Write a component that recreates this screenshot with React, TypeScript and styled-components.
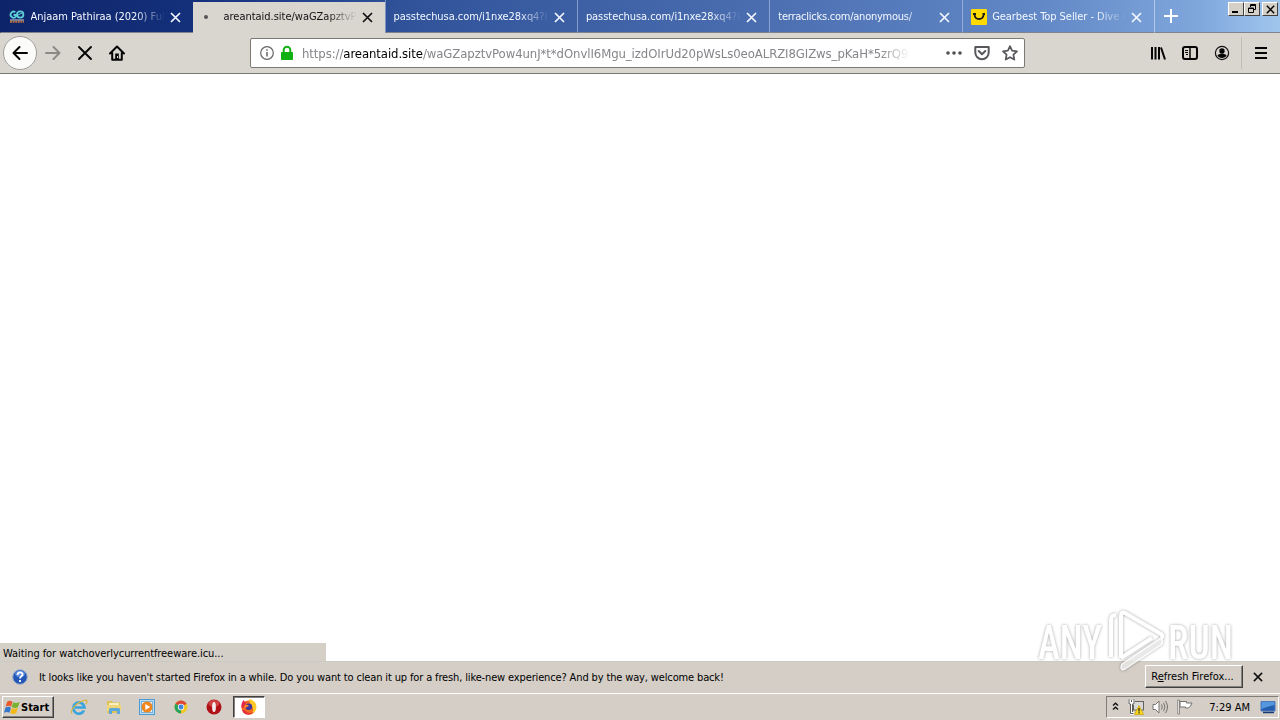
import styled, { createGlobalStyle } from "styled-components";

const GlobalStyle = createGlobalStyle`
  * { box-sizing: border-box; }
  body {
    margin: 0;
    overflow: hidden;
    font-family: "DejaVu Sans Condensed", "DejaVu Sans", sans-serif;
    font-stretch: condensed;
    font-size: 11px;
    color: #000;
  }
  svg { display: block; flex: none; }
`;

const Screen = styled.div`
  position: relative;
  width: 1280px;
  height: 720px;
  display: flex;
  flex-direction: column;
  background: #fff;
`;

const Label = styled.span<{ $spacing?: number }>`
  white-space: pre;
  letter-spacing: ${(p) => p.$spacing ?? 0}px;
`;

const TabBar = styled.div`
  display: flex;
  height: 33px;
  flex: none;
  background: linear-gradient(90deg, #0e2469 0, #14307b 192px, #2f5299 400px, #4a6db0 750px, #6288c6 1040px, #80a7dc 1200px, #a0c6ee 1280px);
`;

const Tab = styled.div<{ $active?: boolean }>`
  display: flex;
  align-items: center;
  width: ${(p) => (p.$active ? 191.5 : 192.4)}px;
  height: ${(p) => (p.$active ? 31 : 33)}px;
  margin-top: ${(p) => (p.$active ? 2 : 0)}px;
  padding: 2px 12px 0 8px;
  padding-top: ${(p) => (p.$active ? 0 : 2)}px;
  padding-bottom: ${(p) => (p.$active ? 1 : 0)}px;
  color: ${(p) => (p.$active ? "#111" : "#f4f8ff")};
  background: ${(p) => (p.$active ? "#d9d6d0" : "transparent")};
  border-left: 1px solid ${(p) => (p.$active ? "#d9d6d0" : "rgba(190, 205, 230, 0.55)")};
  border-bottom: ${(p) => (p.$active ? "none" : "1px solid #7f848c")};
  &:first-child { width: 193px; border-left-color: transparent; padding-right: 12.5px; }
`;

const TabIcon = styled.div`
  display: flex;
  justify-content: center;
  width: 16px;
  margin-right: 5.5px;
`;

const TabText = styled.div`
  flex: 1;
  min-width: 0;
  overflow: hidden;
  line-height: 18px;
  margin-right: 5px;
  mask-image: linear-gradient(90deg, #000 calc(100% - 30px), transparent 100%);
`;

const TabRest = styled.div`
  flex: 1;
  display: flex;
  justify-content: space-between;
  border-left: 1px solid rgba(200, 218, 240, 0.7);
  border-bottom: 1px solid #7f848c;
  padding: 8px 2px 0 8px;
`;

const WindowButtons = styled.div`
  display: flex;
  margin-top: -6px;
`;

const WindowButton = styled.div<{ $gap?: boolean }>`
  width: 16px;
  height: 14px;
  display: flex;
  align-items: center;
  justify-content: center;
  margin-left: ${(p) => (p.$gap ? 2 : 0)}px;
  background: #d4d0c8;
  border: 1px solid;
  border-color: #fff #404040 #404040 #fff;
`;

const Toolbar = styled.div`
  display: flex;
  align-items: center;
  height: 41px;
  flex: none;
  background: #d9d6d0;
  border-bottom: 1px solid #777774;
  padding: 0 11px 0 3px;
`;

const BackButton = styled.div`
  width: 34px;
  height: 34px;
  border-radius: 50%;
  display: flex;
  align-items: center;
  justify-content: center;
  background: #fbfbfa;
  border: 1px solid #a19f9a;
`;

const NavIcons = styled.div`
  display: flex;
  gap: 16px;
  margin-left: 8px;
  width: 205px;
`;

const UrlBar = styled.div`
  display: flex;
  align-items: center;
  width: 775px;
  height: 30px;
  background: #fff;
  border: 1px solid #7b7974;
  border-radius: 2px;
  padding: 0 6px 0 8px;
`;

const LockSlot = styled.div`
  margin-left: 4px;
`;

const UrlText = styled.div`
  width: 608px;
  overflow: hidden;
  font-size: 13px;
  line-height: 20px;
  padding-top: 2px;
  white-space: pre;
  letter-spacing: -0.08px;
  color: #85858a;
  margin-left: 7px;
  margin-right: 36px;
  mask-image: linear-gradient(90deg, #000 calc(100% - 30px), transparent 100%);
`;

const Domain = styled.span`
  color: #000;
`;

const UrlActions = styled.div`
  display: flex;
  gap: 12px;
`;

const ToolIcons = styled.div`
  display: flex;
  align-items: center;
  gap: 16px;
  margin-left: auto;
`;

const Divider = styled.div`
  width: 1px;
  height: 32px;
  margin: 0 -5px 0 -5px;
  background: #c0bdb6;
`;

const Page = styled.div`
  flex: 1;
  display: flex;
  align-items: flex-end;
  background: #fff;
`;

const StatusPanel = styled.div`
  width: 326px;
  height: 18px;
  padding: 0 3px;
  line-height: 21px;
  background: #d4d0c8;
`;

const NoticeBar = styled.div`
  display: flex;
  align-items: center;
  height: 32px;
  flex: none;
  background: #d4cec7;
  border-top: 1px solid #cbc9c4;
  padding: 0 17px 2px 12px;
`;

const NoticeText = styled.div`
  flex: 1;
  padding: 1px 0 0 11px;
`;

const RefreshButton = styled.div`
  width: 98px;
  height: 23px;
  margin: -1px 10px 0 0;
  padding-right: 3px;
  text-align: center;
  line-height: 21px;
  background: #d4cec7;
  border: 1px solid;
  border-color: #fff #404040 #404040 #fff;
  box-shadow: inset -1px -1px 0 #85817c;
`;

const Taskbar = styled.div`
  display: flex;
  align-items: center;
  height: 27px;
  flex: none;
  background: #d4cec7;
  border-top: 1px solid #fff;
  padding: 0 1px 0 2px;
`;

const StartButton = styled.div`
  display: flex;
  align-items: center;
  width: 52px;
  height: 22px;
  padding-left: 1px;
  font-weight: bold;
  border: 1px solid;
  border-color: #fff #404040 #404040 #fff;
  box-shadow: inset -1px -1px 0 #85817c;
`;

const QuickLaunch = styled.div`
  display: flex;
  gap: 17.6px;
  margin-left: 16px;
`;

const RunningApp = styled.div`
  display: flex;
  align-items: center;
  justify-content: center;
  width: 32px;
  height: 22px;
  margin-left: 10.6px;
  background: #fff;
  border: 1px solid;
  border-color: #404040 #fff #fff #404040;
  box-shadow: inset 1px 1px 0 #85817c;
`;

const Tray = styled.div`
  display: flex;
  align-items: center;
  width: 173px;
  height: 22px;
  margin-left: auto;
  padding: 0 2px 0 5px;
  border: 1px solid;
  border-color: #807c77 #fff #fff #807c77;
`;

const TrayIcons = styled.div`
  display: flex;
  align-items: center;
  gap: 8px;
  margin-left: 9px;
`;

const Clock = styled.div`
  flex: 1;
  text-align: right;
  margin-right: 10px;
`;

// lies over the page and the notification bar
const Watermark = styled.div`
  position: absolute;
  left: 1030px;
  top: 602px;
  pointer-events: none;
`;

const WatermarkShapes = styled.g`
  filter: drop-shadow(0 0 1.5px rgba(0, 0, 0, 0.42));
`;

const Cross = ({ size = 11, color = "#111", weight = 1.7 }) => (
  <svg width={size} height={size} viewBox="0 0 11 11">
    <path d="M1 1l9 9M10 1l-9 9" stroke={color} strokeWidth={weight} fill="none" />
  </svg>
);

const GoIcon = () => (
  <svg width="16" height="16" viewBox="0 0 16 16">
    <path d="M6.3 3.2A3 3 0 1 0 7 7.5V6H4.6" stroke="#5fd0d8" strokeWidth="1.8" fill="none" />
    <circle cx="11.2" cy="5.5" r="3.2" stroke="#5fd0d8" strokeWidth="1.8" fill="none" />
    <path d="M9 6l4-2" stroke="#5fd0d8" />
    <path d="M1 11h14" stroke="#d2d7dd" strokeWidth="1" />
    <path d="M1 12.7h14" stroke="#b5713f" strokeWidth="2" strokeDasharray="2 .6" />
  </svg>
);

const LoadingDot = () => (
  <svg width="16" height="16" viewBox="0 0 16 16">
    <circle cx="4" cy="8" r="2" fill="#555" />
  </svg>
);

const SmileIcon = () => (
  <svg width="16" height="16" viewBox="0 0 16 16">
    <rect width="16" height="16" rx="1" fill="#ffda00" />
    <path d="M2 5h3M3.500 5.500c.5 6 8.500 6 9.200 0M11.500 5H14" stroke="#211c10" strokeWidth="1.800" fill="none" />
  </svg>
);

const BackArrow = () => (
  <svg width="16" height="16" viewBox="0 0 16 16" fill="none" stroke="#050505" strokeWidth="2" strokeLinecap="round" strokeLinejoin="round">
    <path d="M15 8H1.500M7.500 2l-6 6 6 6" />
  </svg>
);

const ForwardArrow = () => (
  <svg width="16" height="16" viewBox="0 0 16 16" fill="none" stroke="#8b8984" strokeWidth="2" strokeLinecap="round" strokeLinejoin="round">
    <path d="M1 8h13.500M8.500 2l6 6-6 6" />
  </svg>
);

const StopIcon = () => (
  <svg width="16" height="16" viewBox="0 0 16 16">
    <path d="M2 2l12 12M14 2L2 14" stroke="#050505" strokeWidth="1.900" strokeLinecap="round" />
  </svg>
);

const HomeIcon = () => (
  <svg width="16" height="16" viewBox="0 0 16 16" fill="none" stroke="#050505" strokeWidth="2" strokeLinecap="round" strokeLinejoin="round">
    <path d="M1 8.500L8 1.500l7 7M3.200 8v6.800h9.600V8" />
    <path d="M8 14V8.500" strokeWidth="3.600" strokeLinecap="butt" />
    <path d="M8.500 11v2" stroke="#d9d6d0" strokeWidth="1" strokeLinecap="butt" />
  </svg>
);

const InfoIcon = () => (
  <svg width="16" height="16" viewBox="0 0 16 16">
    <circle cx="8" cy="8" r="6.300" stroke="#65656a" strokeWidth="1.200" fill="none" />
    <path d="M8 7v4.500M8 4.300v1.500" stroke="#65656a" strokeWidth="1.500" />
  </svg>
);

const LockIcon = () => (
  <svg width="16" height="16" viewBox="0 0 16 16">
    <path d="M4.700 8V5a3.300 3.300 0 0 1 6.600 0v3" stroke="#12b012" strokeWidth="2" fill="none" />
    <rect x="2" y="7" width="12" height="8" rx="1" fill="#12b012" />
  </svg>
);

const DotsIcon = () => (
  <svg width="16" height="16" viewBox="0 0 16 16" fill="#505055">
    <circle cx="2" cy="8" r="1.800" />
    <circle cx="8" cy="8" r="1.800" />
    <circle cx="14" cy="8" r="1.800" />
  </svg>
);

const PocketIcon = () => (
  <svg width="16" height="16" viewBox="0 0 16 16" fill="none" stroke="#57575c" strokeWidth="2" strokeLinecap="round" strokeLinejoin="round">
    <path d="M1.300 2h13.400v5.500a6.700 6.700 0 0 1-13.400 0z" />
    <path d="M4.700 6L8 9.200 11.300 6" />
  </svg>
);

const StarIcon = () => (
  <svg width="16" height="16" viewBox="0 0 16 16" fill="none" stroke="#57575c" strokeWidth="1.700" strokeLinejoin="round">
    <path d="M8 1.200l2.100 4.500 4.900.6-3.600 3.400.9 4.900L8 12.200l-4.300 2.400.9-4.900L1 6.300l4.900-.6z" />
  </svg>
);

const LibraryIcon = () => (
  <svg width="16" height="16" viewBox="0 0 16 16" stroke="#050505" strokeWidth="2">
    <path d="M2 2v12.500M5.500 2v12.500M9 2v12.500M11 2.500l4 12" />
  </svg>
);

const SidebarIcon = () => (
  <svg width="16" height="16" viewBox="0 0 16 16" fill="none" stroke="#050505">
    <rect x="1" y="2" width="14" height="12" rx="2" strokeWidth="2" />
    <path d="M8 2v12" strokeWidth="1.500" />
    <path d="M3 5.500h3M3 7.500h3M4 9.500h2" />
  </svg>
);

const AccountIcon = () => (
  <svg width="16" height="16" viewBox="0 0 16 16">
    <circle cx="8" cy="8" r="6.600" fill="none" stroke="#111" strokeWidth="1.200" />
    <circle cx="8" cy="6" r="2.700" fill="#050505" />
    <path d="M3.500 10.200c2-2 7-2 9 0-1 3.700-8 3.700-9 0z" fill="#050505" />
  </svg>
);

const MenuIcon = () => (
  <svg width="16" height="16" viewBox="0 0 16 16">
    <path d="M2 3h12M2 8h12M2 13h12" stroke="#050505" strokeWidth="2" />
  </svg>
);

const QuestionIcon = () => (
  <svg width="16" height="16" viewBox="0 0 16 16">
    <circle cx="8" cy="8" r="7.300" fill="#2456b6" stroke="#9baecb" />
    <ellipse cx="8" cy="4.800" rx="5" ry="3.300" fill="#5d8ddd" />
    <path d="M5.600 6c0-3.300 5-3.300 5-.5C10.600 7.400 8 7.300 8 9.600M8 11v2" stroke="#fff" strokeWidth="1.800" fill="none" />
  </svg>
);

const WindowsFlag = () => (
  <svg width="17" height="17" viewBox="0 0 16 16">
    <path d="M3 2.500c2-1.500 3.500-1 5 0L6.700 7.200c-1.500-1-3-1.200-5.200 0z" fill="#e8592c" />
    <path d="M8.700 3c2 1 3.500 1 6-.5l-1.500 5c-2 1.500-4 1-5.800 0z" fill="#79b32c" />
    <path d="M1.300 8.200c2-1.200 3.700-1 5.200 0L5.200 13c-1.500-1-3-1.200-5.200 0z" fill="#3577c9" />
    <path d="M7.200 8.500c2 1 3.500 1 5.800-.2l-1.300 4.900c-2 1.300-4 1-5.800 0z" fill="#f2b91c" />
  </svg>
);

const ExplorerIcon = () => (
  <svg width="18" height="16" viewBox="0 0 18 16" fill="none">
    <path d="M14 11.500A5.600 5.600 0 1 1 14.500 8.500H5" stroke="#39a5de" strokeWidth="2.700" />
    <path d="M2 14.500C-1 12 7 2.500 15.500 1.200c2.500 0 1.500 2.500.5 4" stroke="#d9b544" strokeWidth="1.300" />
  </svg>
);

const FolderIcon = () => (
  <svg width="16" height="16" viewBox="0 0 16 16">
    <path d="M1 2h5l1 1.500h7V14H1z" fill="#dfc257" />
    <path d="M3 4h10v4H3z" fill="#f8efbf" />
    <path d="M1 6h14v6H1z" fill="#f1d679" />
    <path d="M3 15v-4.500q0-1.500 1.500-1.500h8q1.500 0 1.500 1.500V15h-3v-3H6v3z" fill="#5ba6da" />
  </svg>
);

const MediaIcon = () => (
  <svg width="16" height="16" viewBox="0 0 16 16">
    <rect x=".5" y=".5" width="15" height="15" fill="#b9dcf4" stroke="#4d9bd3" />
    <rect x="2.500" y="2.500" width="11" height="11" fill="#e6f2fa" stroke="#77b1da" />
    <circle cx="8" cy="8" r="5.500" fill="#f0861c" />
    <path d="M6.300 5l5 3-5 3z" fill="#fff" />
  </svg>
);

const ChromeIcon = () => (
  <svg width="16" height="16" viewBox="0 0 16 16">
    <circle cx="8" cy="8" r="6.500" fill="#f3c623" />
    <path d="M8 8L2.400 4.800A6.500 6.500 0 0 1 13.600 4.800z" fill="#db4537" />
    <path d="M8 8L2.400 4.800A6.500 6.500 0 0 0 8 14.500z" fill="#26a35a" />
    <circle cx="8" cy="8" r="3.200" fill="#f2f2f2" />
    <circle cx="8" cy="8" r="2.400" fill="#4285dc" />
  </svg>
);

const OperaIcon = () => (
  <svg width="16" height="16" viewBox="0 0 16 16">
    <circle cx="8" cy="8" r="7.500" fill="#b01116" />
    <ellipse cx="8" cy="4.500" rx="5.500" ry="3.500" fill="#cf4143" />
    <ellipse cx="8" cy="8" rx="1.900" ry="5" fill="#f2eeee" />
  </svg>
);

const FirefoxIcon = () => (
  <svg width="18" height="18" viewBox="0 0 18 18">
    <circle cx="8.500" cy="9.500" r="7" fill="#f36b20" />
    <path d="M9 1c6 1 8.500 6 7 10.500-1 3-4 5.500-7.500 5.500 5-2 5.500-5 4-8C11.500 6 9 5 9 1z" fill="#ffc928" />
    <path d="M1.500 10C1 5 3 2.500 4 2c0 1.500 1 2 2 2.500L4 9z" fill="#e5264b" />
    <path d="M2 12c2 6 9 6 12 2-4 2-8 1-9-2z" fill="#e4313d" />
    <circle cx="8.800" cy="8.800" r="3.300" fill="#3d36a0" />
    <path d="M4 8c2-2 4-1 5 0-1 1-3 .500-3 2z" fill="#ff8a1d" />
  </svg>
);

const ChevronsIcon = () => (
  <svg width="7" height="10" viewBox="0 0 7 10" fill="none" stroke="#111" strokeWidth="1.400">
    <path d="M1 3.500l2.500-2.200L6 3.500M1 7.500l2.500-2.200L6 7.500" />
  </svg>
);

const NetworkIcon = () => (
  <svg width="16" height="16" viewBox="0 0 16 16">
    <rect x="5.500" y="2.500" width="10" height="8.500" fill="#d8d8d6" stroke="#62625f" />
    <path d="M7 13.500h7" stroke="#777" />
    <path d="M1.500 1v3.500h4V1M3.500 1v13.500h3" stroke="#fff" strokeWidth="2.500" fill="none" />
    <path d="M1 .5v4.500h1.500v9.500h3M6 .5v4.500H4.500V13M3.500 1v2" stroke="#5b5b58" fill="none" />
    <path d="M11 6.500l4.700 9H6.300z" fill="#f8d81c" stroke="#c9a40e" strokeWidth=".7" />
    <path d="M11 9v3.500M11 13.300v1.200" stroke="#332b08" strokeWidth="1.300" />
  </svg>
);

const VolumeIcon = () => (
  <svg width="17" height="16" viewBox="0 0 17 16" fill="none" stroke="#767471">
    <path d="M1 5.500h2.500L7 2v12l-3.500-3.500H1z" fill="#fff" />
    <path d="M9.500 5.500q1.500 2.500 0 5M11.500 3.800q3 4.200 0 8.400M13.500 2q4 6 0 12" />
  </svg>
);

const FlagIcon = () => (
  <svg width="17" height="16" viewBox="0 0 17 16">
    <path d="M3 2.500h6.500V4H15l-1.500 3-2 2H8.500V8H3z" fill="#fff" stroke="#72706d" />
    <path d="M.8 1v14h1.700V1z" fill="#fff" stroke="#72706d" strokeWidth=".8" />
  </svg>
);

const DesktopIcon = () => (
  <svg width="16" height="14" viewBox="0 0 16 14">
    <path d="M1 1.500h14V11H1z" fill="#245eae" stroke="#4c79b9" />
    <path d="M1.500 2h13v3q-6 1-13 4z" fill="#5597df" />
    <path d="M3 12.500h11" stroke="#173b73" strokeWidth="1.500" />
  </svg>
);

const WatermarkLogo = () => (
  <svg width="210" height="76" viewBox="0 0 210 76" opacity=".85">
    <WatermarkShapes fill="#fff" fontFamily="Roboto, sans-serif" fontWeight="500" fontSize="49">
      <text x="8" y="57" textLength="64" lengthAdjust="spacingAndGlyphs">ANY</text>
      <text x="138" y="57" textLength="65" lengthAdjust="spacingAndGlyphs">RUN</text>
    </WatermarkShapes>
    <WatermarkShapes fill="none" stroke="#fff" strokeWidth="4" strokeLinejoin="round">
      <path d="M81 55V18q0-5 5-5" />
      <path d="M91 56V14q0-5 4-3l36 21q3 2 0 4" />
      <path d="M91 56l31-20" />
      <path d="M91 65q0 4 4 2l36-24q3-3 0-7L92 62z" strokeWidth="1.500" fill="#e6e6e6" />
    </WatermarkShapes>
  </svg>
);

const tabs = [
  { title: "Anjaam Pathiraa (2020) Full", icon: <GoIcon />, spacing: -0.02 },
  { title: "areantaid.site/waGZapztvP", icon: <LoadingDot />, active: true, spacing: -0.02 },
  { title: "passtechusa.com/i1nxe28xq4?k", spacing: -0.06 },
  { title: "passtechusa.com/i1nxe28xq4?k", spacing: -0.06 },
  { title: "terraclicks.com/anonymous/", spacing: -0.24 },
  { title: "Gearbest Top Seller - Dive i", icon: <SmileIcon />, spacing: -0.05 },
];

function App() {
  return (
    <Screen>
      <GlobalStyle />
      <TabBar>
        {tabs.map((tab, i) => (
          <Tab key={i} $active={tab.active}>
            {tab.icon && <TabIcon>{tab.icon}</TabIcon>}
            <TabText>
              <Label $spacing={tab.spacing}>{tab.title}</Label>
            </TabText>
            <Cross color={tab.active ? "#111" : "#f2f7ff"} />
          </Tab>
        ))}
        <TabRest>
          <svg width="16" height="16" viewBox="0 0 16 16">
            <path d="M8 1v14M1 8h14" stroke="#fff" strokeWidth="2" />
          </svg>
          <WindowButtons>
            <WindowButton>
              <svg width="10" height="10"><path d="M1 8h6" stroke="#000" strokeWidth="2" /></svg>
            </WindowButton>
            <WindowButton>
              <svg width="10" height="10" fill="none" stroke="#000"><path d="M3.500 3V.5h5v5H7M3 1.500h6M1.500 4h5v4.500h-5zM1 4.500h6" /></svg>
            </WindowButton>
            <WindowButton $gap>
              <Cross size={9} color="#000" weight={1.8} />
            </WindowButton>
          </WindowButtons>
        </TabRest>
      </TabBar>
      <Toolbar>
        <BackButton><BackArrow /></BackButton>
        <NavIcons>
          <ForwardArrow />
          <StopIcon />
          <HomeIcon />
        </NavIcons>
        <UrlBar>
          <InfoIcon />
          <LockSlot><LockIcon /></LockSlot>
          <UrlText>
            https://<Domain>areantaid.site</Domain>/waGZapztvPow4unJ*t*dOnvlI6Mgu_izdOIrUd20pWsLs0eoALRZI8GIZws_pKaH*5zrQ9
          </UrlText>
          <UrlActions>
            <DotsIcon />
            <PocketIcon />
            <StarIcon />
          </UrlActions>
        </UrlBar>
        <ToolIcons>
          <LibraryIcon />
          <SidebarIcon />
          <AccountIcon />
          <Divider />
          <MenuIcon />
        </ToolIcons>
      </Toolbar>
      <Page>
        <StatusPanel>
          <Label $spacing={-0.07}>Waiting for watchoverlycurrentfreeware.icu...</Label>
        </StatusPanel>
      </Page>
      <NoticeBar>
        <QuestionIcon />
        <NoticeText>
          <Label $spacing={-0.14}>It looks like you haven't started Firefox in a while. Do you want to clean it up for a fresh, like-new experience? And by the way, welcome back!</Label>
        </NoticeText>
        <RefreshButton>
          <Label>R<u>e</u>fresh Firefox...</Label>
        </RefreshButton>
        <Cross size={10} />
      </NoticeBar>
      <Taskbar>
        <StartButton>
          <WindowsFlag />
          <Label>Start</Label>
        </StartButton>
        <QuickLaunch>
          <ExplorerIcon />
          <FolderIcon />
          <MediaIcon />
          <ChromeIcon />
          <OperaIcon />
        </QuickLaunch>
        <RunningApp><FirefoxIcon /></RunningApp>
        <Tray>
          <ChevronsIcon />
          <TrayIcons>
            <NetworkIcon />
            <VolumeIcon />
            <FlagIcon />
          </TrayIcons>
          <Clock><Label>7:29 AM</Label></Clock>
          <DesktopIcon />
        </Tray>
      </Taskbar>
      <Watermark><WatermarkLogo /></Watermark>
    </Screen>
  );
}

export default App;
